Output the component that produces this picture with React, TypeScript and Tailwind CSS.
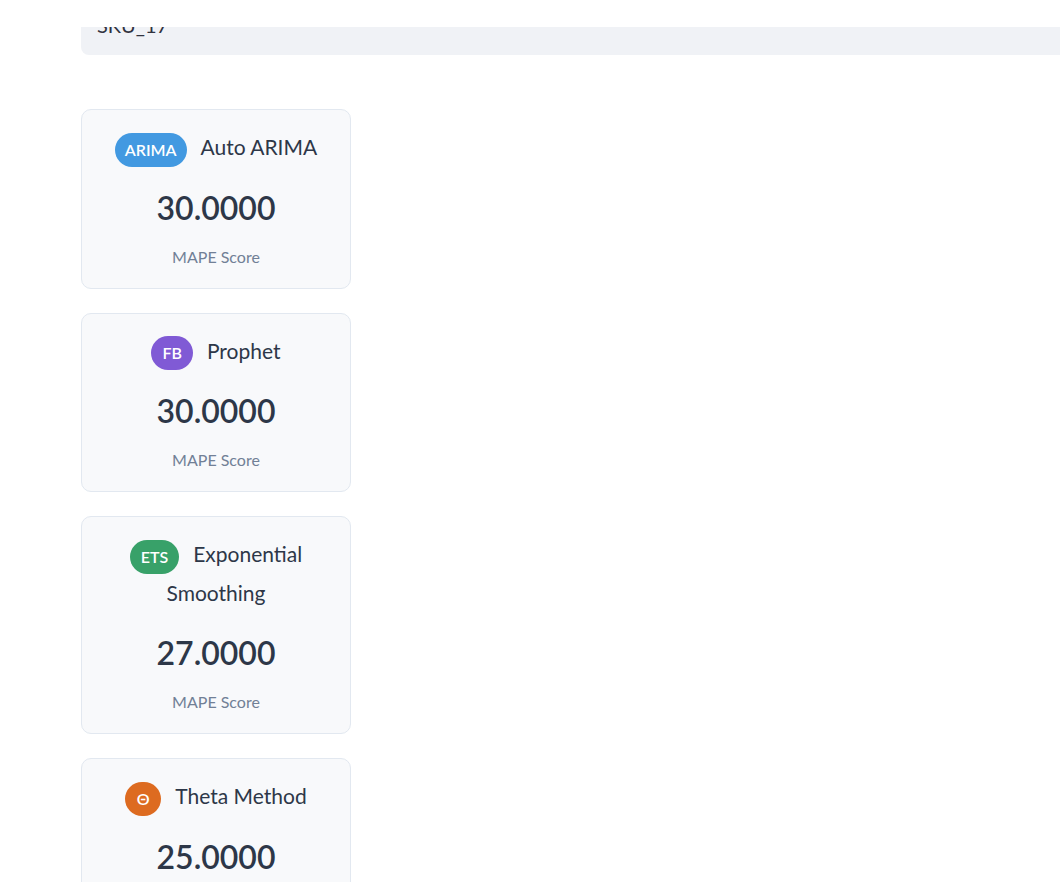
const models = [
  { badge: 'ARIMA', badgeClass: 'bg-[#4299e1] px-[10px] rounded-full', name: 'Auto ARIMA', score: '30.0000' },
  { badge: 'FB', badgeClass: 'bg-[#805ad5] px-[11px] rounded-full', name: 'Prophet', score: '30.0000' },
  { badge: 'ETS', badgeClass: 'bg-[#38a169] px-[11px] rounded-full', name: 'Exponential Smoothing', score: '27.0000' },
  { badge: 'Θ', badgeClass: 'bg-[#dd6b20] w-9 justify-center rounded-full', name: 'Theta Method', score: '25.0000' },
]

function ModelCard({ m }: { m: (typeof models)[number] }) {
  return (
    <div className="w-[270px] rounded-[10px] border border-[#e2e8f0] bg-[#f8f9fb] px-5 pt-[18px] pb-[21px] text-center">
      <h3 className="text-[21px] leading-[38px] text-[#2d3748]">
        <span
          className={`mr-[14px] inline-flex h-[34px] items-center align-middle text-[16px] leading-none font-semibold text-white ${m.badgeClass}`}
        >
          {m.badge}
        </span>
        {m.name}
      </h3>
      <p className="mt-[21px] text-[32px] font-semibold leading-[40px] text-[#2d3748]">{m.score}</p>
      <p className="mt-[18px] text-[16px] leading-[21px] text-[#718096]">MAPE Score</p>
    </div>
  )
}

export default function App() {
  return (
    <div
      className="h-[882px] overflow-hidden bg-white pl-[81px] pt-[27px]"
      style={{ fontFamily: '"Source Sans Pro", Lato, "Noto Sans", sans-serif' }}
    >
      <div className="h-[28px] w-[1100px] overflow-hidden rounded-b-lg bg-[#f0f2f6] px-4">
        <div className="-mt-[14px] text-[20px] leading-[24px] text-[#31333f]">SKU_17</div>
      </div>
      <div className="mt-[54px] flex flex-col gap-6">
        {models.map((m) => (
          <ModelCard key={m.name} m={m} />
        ))}
      </div>
    </div>
  )
}
